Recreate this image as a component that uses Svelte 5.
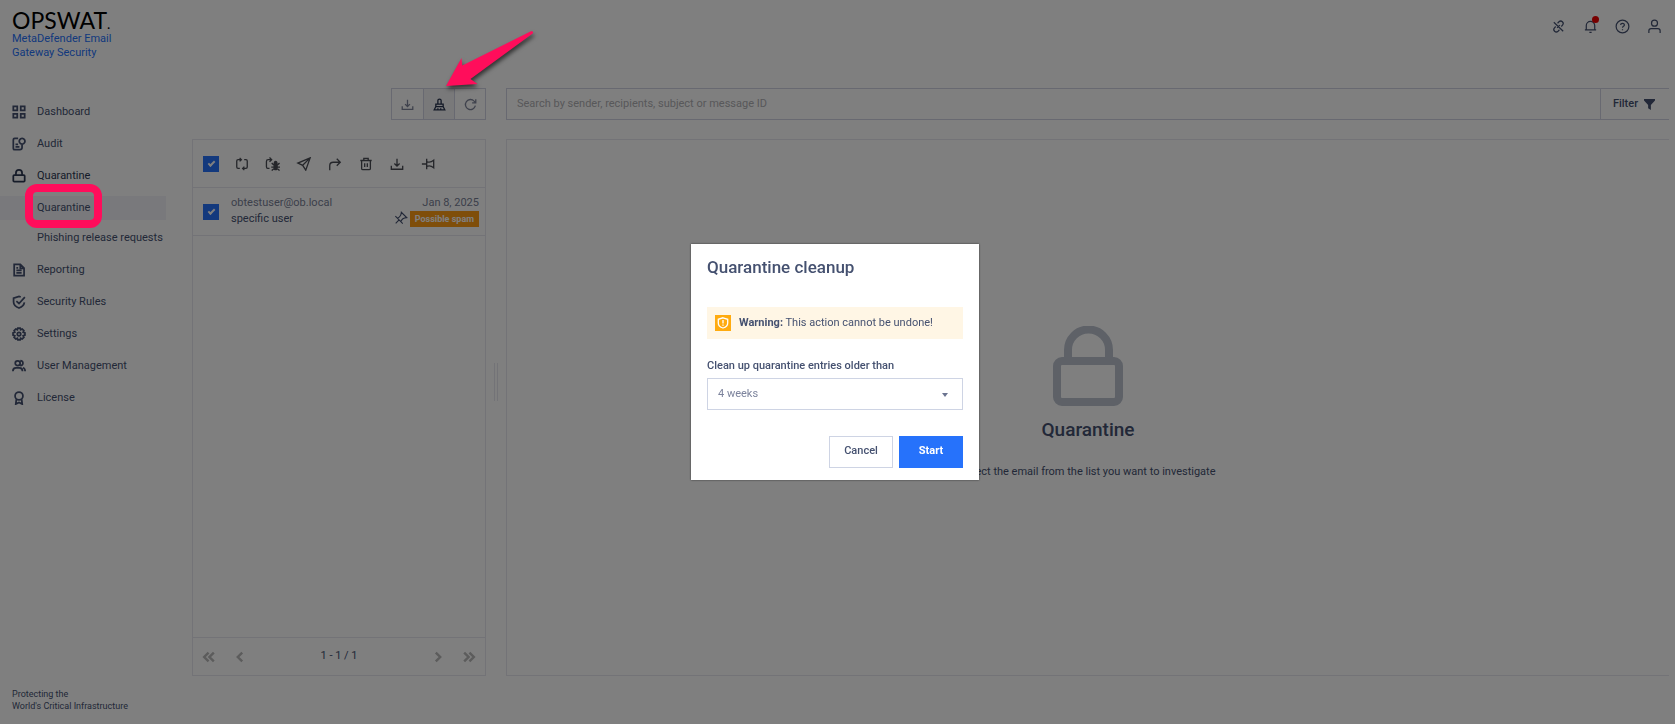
<script lang="ts">
    let allSelected = true;
    let olderThan = '4 weeks';
    let search = '';

    const ages = ['1 week', '2 weeks', '4 weeks', '8 weeks', '12 weeks'];

    const nav = [
        { label: 'Dashboard', icon: 'dashboard' },
        { label: 'Audit', icon: 'audit' },
        { label: 'Quarantine', icon: 'lock', children: ['Quarantine', 'Phishing release requests'] },
        { label: 'Reporting', icon: 'report' },
        { label: 'Security Rules', icon: 'shield' },
        { label: 'Settings', icon: 'gear' },
        { label: 'User Management', icon: 'users' },
        { label: 'License', icon: 'license' }
    ];

    const actions = [
        { label: 'Rescan', icon: 'rescan' },
        { label: 'Report as false positive', icon: 'bug' },
        { label: 'Release', icon: 'send' },
        { label: 'Forward', icon: 'forward' },
        { label: 'Delete', icon: 'trash' },
        { label: 'Download', icon: 'download' },
        { label: 'Pin', icon: 'pin' }
    ];

    let messages = [
        { from: 'obtestuser@ob.local', date: 'Jan 8, 2025', subject: 'specific user', tag: 'Possible spam', selected: true }
    ];

    // stroked paths on a 16 unit grid
    const icons: Record<string, string> = {
        dashboard: 'M1.500 1.500h4.500v4.500H1.500z M10 1.500h4.500v4.500H10z M1.500 10h4.500v4.500H1.500z M10 10h4.500v4.500H10z',
        audit: 'M7 1.500H3Q1.500 1.500 1.500 3V13Q1.500 14.500 3 14.500H9 M11.500 8a3.200 3.200 0 1 1 .1 0 M11.500 8v4q0 2.500-2.500 2.500 M4 8.500H7 M4 11.300H8.500',
        lock: 'M2.500 7h11q1 0 1 1V13.500q0 1-1 1h-11q-1 0-1-1V8q0-1 1-1z M4.500 7V4.500a3.500 3.500 0 0 1 7 0v2.500',
        report: 'M2.500 1.500h7l4.300 4.300V14.500H2.500z M9.500 1.500v4.500h4.300 M5 5.500h2 M5 8.500h6 M5 11.300h6',
        shield: 'M10 2.300L8 1.500 1.800 3.700V8c0 3.200 2.700 5.500 6.200 6.800 3.500-1.300 5.700-3.300 6.200-6.500 M5 7l3 2.700L14.700 2.500',
        gear: 'M6.700 1.200h2.600l.5 2 1.900-.9 1.900 1.900-.8 1.800 2 .7v2.600l-2 .7.8 1.800-1.900 1.900-1.900-.9-.5 2H6.700l-.5-2-1.900.9-1.900-1.900.8-1.800-2-.7V6.700l2-.7-.8-1.800 1.900-1.900 1.900.9z M8 6a2 2 0 1 1 0 4 2 2 0 0 1 0-4z',
        users: 'M6.500 2a2.800 2.800 0 1 1 0 5.600 2.800 2.800 0 0 1 0-5.600z M1 14c0-2.700 1.500-4 3.500-4h4c2 0 3.500 1.300 3.500 4 M9.500 2c4-.2 4 5.700 0 5.500 M12.500 10c1.700.4 2.500 1.800 2.500 4',
        license: 'M8 1.200a4.500 4.500 0 1 1 0 9 4.500 4.500 0 0 1 0-9z M5 9.200l-.7 5.800L8 13.200l3.700 1.800L11 9.200',
        unlink: 'M7 4.500l1.500-1.500c2.500-2.300 6 1 3.800 3.500L11 8 M9 11.500L7.500 13c-2.500 2.300-6-1-3.800-3.500L5 8 M6.500 9.500l3-3 M3 3.500l10 9.500',
        bell: 'M2 11.500h12 M3.500 11.500V7a4.500 4.500 0 0 1 9 0v4.500 M6.800 14.300h2.400',
        help: 'M8 1.200a6.800 6.800 0 1 1 0 13.600A6.800 6.800 0 0 1 8 1.200z M6 6.500c0-2.600 4-2.500 4-.2C10 7.900 8 7.800 8 9.300 M8 10.800v1.200',
        user: 'M8 1.200a3.200 3.200 0 1 1 0 6.400 3.200 3.200 0 0 1 0-6.400z M2 14.800V12.500q0-2.300 2.300-2.300h7.400q2.300 0 2.300 2.300v2.300',
        download: 'M1.500 10v4h13v-4 M8 2v8.500 M5 7.500l3 3 3-3',
        broom: 'M6 7V3q0-1.500 2-1.500T10 3v4 M3.500 10.500V7.500h9v3 M3.500 10.500h9l2 4H1.500z M6 14.500v-2 M9.500 14.500v-2',
        refresh: 'M14 9.500A6.200 6.200 0 1 1 12.500 3.800L14.500 5.800 M14.500 1.500V6H10',
        rescan: 'M5.500 13H3.500Q2 13 2 11.500V4.500Q2 3 3.500 3H7 M5.300 1l2 2-2 2 M10.500 3h2Q14 3 14 4.500v7q0 1.500-1.500 1.500H9 M10.700 11l-2 2 2 2',
        send: 'M15 1L1 7l5.500 2.500 3.500 5.500z M15 1l-8.500 8.500',
        forward: 'M2 15V10q0-4 4-4h8 M10 2l4 4-4 4',
        trash: 'M1.500 4h13 M5.500 4V1.500h5v2.500 M3 4v9q0 1.500 1.500 1.500h7q1.500 0 1.500-1.500V4 M6.500 7v4.500 M9.500 7v4.500',
        pin: 'M1 8h5.500 M6.500 2v12 M6.500 5.200c3 1.500 5 1 8-1.500v8.600c-3-2.500-5-3-8-1.500',
        first: 'M7.500 3L2.500 8l5 5 M13.500 3l-5 5 5 5',
        prev: 'M10.500 3L5.500 8l5 5',
        next: 'M5.500 3l5 5-5 5',
        last: 'M2.500 3l5 5-5 5 M8.500 3l5 5-5 5'
    };
</script>

{#snippet icon(name: string)}
    <svg class="icon" viewBox="0 0 16 16" aria-hidden="true"><path d={icons[name]} /></svg>
{/snippet}

<div class="page">
    <header>
        <a class="brand" href="#home">
            <span class="logo">OPSWAT<small>.</small></span>
            <span class="product">MetaDefender Email<br />Gateway Security</span>
        </a>
        <div class="tools">
            <button aria-label="Connection">{@render icon('unlink')}</button>
            <button class="alerts" aria-label="Notifications">{@render icon('bell')}</button>
            <button aria-label="Help">{@render icon('help')}</button>
            <button aria-label="Account">{@render icon('user')}</button>
        </div>
    </header>

    <div class="body">
        <aside>
            <nav>
                {#each nav as item}
                    <a class="item" class:open={item.children} href="#nav">{@render icon(item.icon)}{item.label}</a>
                    {#if item.children}
                        {#each item.children as child, i}
                            <a class="sub" class:active={i === 0} href="#sub">
                                {child}
                                {#if i === 0}<span class="highlight"></span>{/if}
                            </a>
                        {/each}
                    {/if}
                {/each}
            </nav>
            <p class="motto">Protecting the<br />World's Critical Infrastructure</p>
        </aside>

        <section class="list">
            <div class="group">
                <button aria-label="Export">{@render icon('download')}</button>
                <button class="current" aria-label="Quarantine cleanup">
                    {@render icon('broom')}
                    <svg class="arrow" viewBox="0 0 92 62" aria-hidden="true">
                        <path d="M2 57L17.500 29l.8 7.500L87 2.300q2.500-.5 2 2L26.500 50l7 5z" />
                    </svg>
                </button>
                <button aria-label="Refresh">{@render icon('refresh')}</button>
            </div>

            <div class="panel messages">
                <div class="actions">
                    <input type="checkbox" aria-label="Select all" bind:checked={allSelected} />
                    {#each actions as action}
                        <button aria-label={action.label}>
                            {#if action.icon === 'bug'}
                                <svg class="icon" viewBox="0 0 16 16" aria-hidden="true">
                                    <path d="M4 13H2Q.5 13 .5 11V5Q.5 3 2.500 3H6 M4 .5l2.500 2.500-2.500 2.500" />
                                    <path d="M6.500 7l2.500 2 M15.500 7l-2.500 2 M6 11.500h10 M6.500 15.500l2.500-2 M15.500 15.500l-2.500-2" />
                                    <path class="solid" d="M9.500 7.500q0-2.500 1.500-2.500t1.500 2.500z M9.300 9h3.400V12q0 2.500-1.700 2.500t-1.700-2.500z" />
                                </svg>
                            {:else}
                                {@render icon(action.icon)}
                            {/if}
                        </button>
                    {/each}
                </div>

                {#each messages as message}
                    <div class="message">
                        <input type="checkbox" aria-label="Select message" bind:checked={message.selected} />
                        <div class="text">
                            <div class="line muted"><span>{message.from}</span><span>{message.date}</span></div>
                            <div class="line">
                                <span>{message.subject}</span>
                                <span class="marks"><span class="pinned">{@render icon('pin')}</span><span class="tag">{message.tag}</span></span>
                            </div>
                        </div>
                    </div>
                {/each}

                <div class="pager">
                    <button aria-label="First page">{@render icon('first')}</button>
                    <button aria-label="Previous page">{@render icon('prev')}</button>
                    <span>1 - 1 / 1</span>
                    <button aria-label="Next page">{@render icon('next')}</button>
                    <button aria-label="Last page">{@render icon('last')}</button>
                </div>
            </div>
        </section>

        <div class="handle"></div>

        <main>
            <div class="search">
                <input type="text" aria-label="Search" placeholder="Search by sender, recipients, subject or message ID" bind:value={search} />
                <button>Filter <svg viewBox="0 0 12 12" aria-hidden="true"><path d="M0 0h12v1.500L7.500 6.500V12L4.500 10v-3.500L0 1.500z" /></svg></button>
            </div>
            <div class="panel empty">
                <svg viewBox="0 0 70 80" aria-hidden="true">
                    <rect x="4" y="35" width="62" height="41" rx="5" />
                    <path d="M15 35V24a20 20 0 0 1 41 0v11" />
                </svg>
                <h2>Quarantine</h2>
                <p>Select the email from the list you want to investigate</p>
            </div>
        </main>
    </div>
</div>

<div class="backdrop">
    <div class="dialog" role="dialog" aria-modal="true" aria-labelledby="title">
        <h1 id="title">Quarantine cleanup</h1>
        <div class="warning">
            <svg viewBox="0 0 16 16" aria-hidden="true">
                <rect width="16" height="16" />
                <path d="M8 2.800l4.700 1.500V8c0 2.500-2 4.200-4.700 5-2.700-.8-4.700-2.500-4.700-5V4.300z M8 5v3.500 M8 9.500v1.300" />
            </svg>
            <span><b>Warning:</b> This action cannot be undone!</span>
        </div>
        <label for="age">Clean up quarantine entries older than</label>
        <div class="select">
            <select id="age" bind:value={olderThan}>
                {#each ages as age}
                    <option>{age}</option>
                {/each}
            </select>
        </div>
        <div class="buttons">
            <button>Cancel</button>
            <button class="primary">Start</button>
        </div>
    </div>
</div>

<style>
    :global(body) {
        background: #fff;
        color: #455170;
        font: 11px/16px Roboto, "Liberation Sans", sans-serif;
    }

    h1, h2, p {
        margin: 0;
    }

    a {
        color: inherit;
        text-decoration: none;
    }

    button, input, select {
        margin: 0;
        padding: 0;
        border: 0;
        background: none;
        color: inherit;
        font: inherit;
    }

    button {
        display: flex;
        align-items: center;
        justify-content: center;
    }

    .icon {
        width: 16px;
        height: 16px;
        flex: none;
        fill: none;
        stroke: currentColor;
        stroke-width: 1.3;
    }

    .page {
        display: flex;
        flex-direction: column;
        min-height: 100vh;
    }

    header {
        display: flex;
        justify-content: space-between;
        height: 88px;
        padding: 8px 13px 0 12px;
        box-sizing: border-box;
    }

    .brand {
        display: flex;
        flex-direction: column;
    }

    .logo {
        height: 24px;
        color: #000;
        font: 23px/24px Lato, sans-serif;
    }

    .logo small {
        font-size: 14px;
        line-height: 1;
    }

    .product {
        color: #2672fb;
        line-height: 14px;
    }

    .tools {
        display: flex;
        gap: 16px;
        height: 36px;
    }

    .tools button {
        position: relative;
        width: 16px;
    }

    .tools .icon {
        width: 15px;
        height: 15px;
    }

    .alerts::after {
        content: "";
        position: absolute;
        top: 8px;
        right: -1px;
        width: 7px;
        height: 7px;
        border-radius: 50%;
        background: #f00000;
    }

    .body {
        display: flex;
        flex: 1;
        padding-right: 6px;
    }

    aside {
        display: flex;
        flex-direction: column;
        justify-content: space-between;
        width: 166px;
        margin-right: 26px;
        flex: none;
    }

    nav {
        padding-top: 8px;
    }

    .item, .sub {
        display: flex;
        align-items: center;
    }

    .item {
        gap: 11px;
        height: 32px;
        padding-left: 12px;
    }

    .item .icon {
        width: 14px;
        height: 14px;
        stroke-width: 2;
    }

    .item.open {
        color: #2d3853;
    }

    .sub {
        height: 24px;
        margin: 4px 0;
        padding-left: 37px;
    }

    .sub + .sub {
        margin: 6px 0 4px;
    }

    .active {
        position: relative;
        background: #f3f3f9;
    }

    .highlight {
        position: absolute;
        z-index: 20;
        top: -12px;
        left: 25px;
        width: 77px;
        height: 44px;
        box-sizing: border-box;
        border: 8px solid #ff0d5b;
        border-radius: 12px;
    }

    .motto {
        padding: 0 12px 12px;
        font-size: 9px;
        line-height: 12px;
        white-space: nowrap;
    }

    .list {
        display: flex;
        flex-direction: column;
        gap: 19px;
        width: 294px;
        padding-bottom: 48px;
        flex: none;
    }

    .group {
        display: flex;
        align-self: flex-end;
        border: 1px solid #d0d2e2;
    }

    .group button {
        box-sizing: border-box;
        width: 31px;
        height: 30px;
        color: #7f859a;
    }

    .group button + button {
        border-left: 1px solid #d0d2e2;
    }

    .group .icon {
        width: 13px;
        height: 13px;
        stroke-width: 1.6;
    }

    .group .current {
        position: relative;
        background: #f2f2f4;
        color: #26324e;
    }

    .arrow {
        position: absolute;
        z-index: 20;
        bottom: 28px;
        left: 20px;
        width: 92px;
        height: 62px;
        fill: #ff0d5b;
        filter: drop-shadow(1px 3px 2px rgba(0, 0, 0, 0.6));
    }

    .panel {
        flex: 1;
        border: 1px solid #e6e7ef;
    }

    .messages {
        display: flex;
        flex-direction: column;
    }

    .actions, .message {
        display: flex;
        align-items: center;
        height: 47px;
        padding: 0 6px 0 10px;
        border-bottom: 1px solid #e6e7ef;
    }

    .actions {
        gap: 15px;
    }

    .actions button {
        color: #4a4d55;
    }

    .actions .icon {
        width: 16px;
        height: 14px;
        stroke-width: 1.5;
    }

    .solid {
        fill: currentColor;
    }

    input[type="checkbox"] {
        appearance: none;
        display: grid;
        place-items: center;
        width: 16px;
        height: 16px;
        flex: none;
        background: #2672fb;
    }

    input[type="checkbox"]:checked::after {
        content: "";
        width: 5px;
        height: 2px;
        border: solid #fff;
        border-width: 0 0 2px 2px;
        transform: translateY(-1px) rotate(-45deg);
    }

    .message {
        gap: 12px;
    }

    .text {
        flex: 1;
        padding-bottom: 1px;
    }

    .line {
        display: flex;
        align-items: center;
        justify-content: space-between;
        height: 16px;
    }

    .muted {
        color: #787e96;
    }

    .marks {
        display: flex;
        align-items: center;
        gap: 3px;
    }

    .pinned {
        display: flex;
    }

    .pinned .icon {
        width: 14px;
        height: 14px;
        transform: rotate(-45deg);
    }

    .tag {
        padding: 0 5px;
        background: #ff9c14;
        color: #fff;
        font-size: 9px;
        font-weight: 700;
    }

    .pager {
        display: flex;
        align-items: center;
        gap: 15px;
        height: 37px;
        margin-top: auto;
        padding: 0 8px;
        border-top: 1px solid #e6e7ef;
    }

    .pager span {
        flex: 1;
        padding-bottom: 2px;
        text-align: center;
    }

    .pager button {
        color: #b8b8b8;
    }

    .pager .icon {
        height: 14px;
        stroke-width: 2.8;
    }

    .handle {
        align-self: center;
        width: 2px;
        height: 38px;
        margin: 0 8px 48px;
        border: solid #e6e7ef;
        border-width: 0 1px;
    }

    main {
        display: flex;
        flex: 1;
        flex-direction: column;
        gap: 19px;
        padding-bottom: 48px;
    }

    .search {
        display: flex;
        height: 30px;
        border: 1px solid #d0d2e2;
        border-right: 0;
    }

    .search input {
        flex: 1;
        padding: 0 10px;
    }

    .search input::placeholder {
        color: #b0b0b4;
        opacity: 1;
    }

    .search button {
        gap: 6px;
        width: 69px;
        padding-right: 2px;
        border-left: 1px solid #d0d2e2;
        font-weight: 500;
    }

    .search svg {
        width: 11px;
        height: 11px;
        fill: currentColor;
    }

    .empty {
        display: flex;
        flex-direction: column;
        align-items: center;
        justify-content: center;
        padding-bottom: 9px;
        border-right: 0;
    }

    .empty svg {
        width: 70px;
        height: 80px;
        fill: none;
        stroke: #bcc3cf;
        stroke-width: 8;
    }

    .empty h2 {
        margin: 12px 0 22px;
        font-size: 19px;
        font-weight: 500;
        line-height: 24px;
    }

    .backdrop {
        position: fixed;
        z-index: 10;
        inset: 0;
        display: flex;
        align-items: center;
        justify-content: center;
        padding-right: 5px;
        background: rgba(0, 0, 0, 0.5);
    }

    .dialog {
        width: 256px;
        padding: 12px 16px;
        background: #fff;
        box-shadow: 0 0 2px rgba(0, 0, 0, 0.6);
    }

    h1 {
        margin-bottom: 29px;
        font-size: 17px;
        font-weight: 500;
        line-height: 22px;
    }

    .warning {
        display: flex;
        align-items: center;
        gap: 8px;
        height: 32px;
        margin-bottom: 19px;
        padding: 0 8px;
        background: #fff6e5;
    }

    .warning svg {
        width: 16px;
        height: 16px;
        fill: none;
        stroke: #fff;
        stroke-width: 1.3;
    }

    .warning rect {
        fill: #ffab0f;
        stroke: none;
    }

    label {
        display: block;
        margin-bottom: 4px;
        font-weight: 500;
    }

    .select {
        position: relative;
    }

    .select::after {
        content: "";
        position: absolute;
        top: 15px;
        right: 15px;
        border: 3px solid transparent;
        border-top: 4px solid #6b7490;
        pointer-events: none;
    }

    select {
        appearance: none;
        width: 100%;
        height: 32px;
        padding: 0 10px;
        border: 1px solid #ced4e4;
        border-radius: 0;
        color: #7c839c;
    }

    .buttons {
        display: flex;
        justify-content: flex-end;
        gap: 6px;
        margin-top: 26px;
    }

    .buttons button {
        width: 64px;
        height: 32px;
        padding-bottom: 2px;
        border: 1px solid #ced4e4;
        font-weight: 500;
    }

    .buttons .primary {
        border-color: #2672fb;
        background: #2672fb;
        color: #fff;
        font-weight: 700;
    }
</style>
